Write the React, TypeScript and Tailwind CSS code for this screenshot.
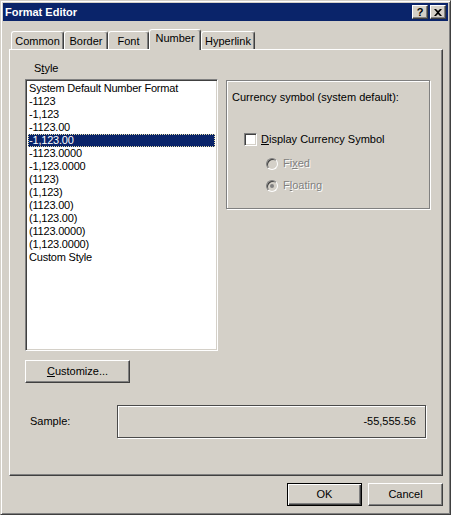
import React from 'react';

const styles = [
  'System Default Number Format',
  '-1123',
  '-1,123',
  '-1123.00',
  '-1,123.00',
  '-1123.0000',
  '-1,123.0000',
  '(1123)',
  '(1,123)',
  '(1123.00)',
  '(1,123.00)',
  '(1123.0000)',
  '(1,123.0000)',
  'Custom Style',
];

const tabs = [
  { label: 'Common', w: 'w-[53px]' },
  { label: 'Border', w: 'w-[44px]' },
  { label: 'Font', w: 'w-[41px]' },
  { label: 'Number', w: 'w-[52px]' },
  { label: 'Hyperlink', w: 'w-[54px]' },
];

// raised 3D edge used by buttons
const raised =
  'border border-t-white border-l-white border-r-[#404040] border-b-[#404040] shadow-[inset_-1px_-1px_0_#808080,inset_1px_1px_0_#d4d0c8]';

const disabled = 'text-[#808080] [text-shadow:1px_1px_0_#fff]';

function Radio({ checked }: { checked?: boolean }) {
  return (
    <span className="w-[12px] h-[12px] rounded-full border border-t-[#808080] border-l-[#808080] border-r-white border-b-white bg-[#d4d0c8] flex items-center justify-center shadow-[inset_1px_1px_0_#404040]">
      {checked && <span className="w-[4px] h-[4px] rounded-full bg-[#808080]" />}
    </span>
  );
}

export default function App() {
  const selected = 4;

  return (
    <div className="w-[451px] h-[515px] bg-[#d4d0c8] text-black text-[11px] leading-[13px] font-['Liberation_Sans',Arial,sans-serif] border border-t-[#d4d0c8] border-l-[#d4d0c8] border-r-[#404040] border-b-[#404040] shadow-[inset_1px_1px_0_#fff,inset_-1px_-1px_0_#808080] p-[2px] flex flex-col">
      {/* title bar */}
      <div className="h-[18px] bg-[#0a246a] flex items-center justify-between pl-[2px] pr-[2px]">
        <span className="text-white font-bold text-[11px]">Format Editor</span>
        <div className="flex gap-[2px]">
          <button className={`w-[16px] h-[14px] bg-[#d4d0c8] ${raised} flex items-center justify-center font-bold text-[11px] leading-none`}>
            ?
          </button>
          <button className={`w-[16px] h-[14px] bg-[#d4d0c8] ${raised} flex items-center justify-center`}>
            <svg width="8" height="7" viewBox="0 0 8 7">
              <path d="M0 0h2l2 2 2-2h2L5 3.5 8 7H6L4 5 2 7H0l3-3.5z" fill="#000" />
            </svg>
          </button>
        </div>
      </div>

      {/* tab strip */}
      <div className="mt-[8px] ml-[6px] pl-[2px] h-[20px] flex items-end">
        {tabs.map((t) => {
          const active = t.label === 'Number';
          return (
            <div
              key={t.label}
              className={`${t.w} ${active ? 'h-[21px] -mb-[1px] relative z-10 pb-[3px]' : 'h-[18px] pt-[1px]'} bg-[#d4d0c8] border-t border-l border-white border-r border-r-[#404040] rounded-t-[3px] shadow-[inset_-1px_0_0_#808080] flex items-center justify-center`}
            >
              {t.label}
            </div>
          );
        })}
      </div>

      {/* tab page */}
      <div className="ml-[6px] w-[434px] h-[427px] border border-t-white border-l-white border-r-[#404040] border-b-[#404040] shadow-[inset_-1px_-1px_0_#808080] pt-[12px] pl-[15px] flex flex-col">
        <div className="ml-[9px] h-[13px] mb-[4px]">
          S<span className="underline">t</span>yle
        </div>

        <div className="flex gap-[8px]">
          {/* style list */}
          <div className="w-[193px] h-[272px] bg-white border border-t-[#808080] border-l-[#808080] border-r-white border-b-white shadow-[inset_1px_1px_0_#404040,inset_-1px_-1px_0_#d4d0c8] p-[2px] tracking-[-0.2px]">
            {styles.map((s, i) => (
              <div
                key={s}
                className={`h-[13px] pl-[1px] whitespace-nowrap ${i === selected ? 'bg-[#0a246a] text-white outline-1 outline-dotted outline-[#e8e0a8] -outline-offset-1' : ''}`}
              >
                {s}
              </div>
            ))}
          </div>

          {/* currency group */}
          <div className="mt-[1px] w-[204px] h-[129px] border border-[#808080] shadow-[inset_1px_1px_0_#fff,1px_1px_0_#fff] pt-[10px] pl-[5px]">
            <div>Currency symbol (system default):</div>
            <div className="mt-[29px] ml-[12px] flex items-center gap-[4px] h-[13px]">
              <span className="w-[13px] h-[13px] bg-white border border-t-[#808080] border-l-[#808080] border-r-white border-b-white shadow-[inset_1px_1px_0_#404040,inset_-1px_-1px_0_#d4d0c8]" />
              <span>
                <span className="underline">D</span>isplay Currency Symbol
              </span>
            </div>
            <div className="mt-[11px] ml-[34px] flex items-center gap-[5px] h-[13px]">
              <Radio />
              <span className={disabled}>
                Fi<span className="underline">x</span>ed
              </span>
            </div>
            <div className="mt-[9px] ml-[34px] flex items-center gap-[5px] h-[13px]">
              <Radio checked />
              <span className={disabled}>
                F<span className="underline">l</span>oating
              </span>
            </div>
          </div>
        </div>

        <button className={`mt-[9px] w-[105px] h-[23px] bg-[#d4d0c8] ${raised} flex items-center justify-center`}>
          <span>
            <span className="underline">C</span>ustomize...
          </span>
        </button>

        <div className="mt-[22px] flex items-center">
          <span className="w-[92px] pl-[5px]">Sample:</span>
          <div className="w-[309px] h-[33px] border border-[#4a4a4a] shadow-[1px_1px_0_#fff,inset_1px_1px_0_#fff] flex items-center justify-end pr-[9px]">
            -55,555.56
          </div>
        </div>
      </div>

      {/* dialog buttons */}
      <div className="mt-[7px] ml-[6px] w-[434px] flex justify-end gap-[6px]">
        <button className="w-[75px] h-[23px] bg-[#d4d0c8] border border-black shadow-[inset_1px_1px_0_#fff,inset_-1px_-1px_0_#404040,inset_-2px_-2px_0_#808080] flex items-center justify-center">
          OK
        </button>
        <button className={`w-[75px] h-[23px] bg-[#d4d0c8] ${raised} flex items-center justify-center`}>
          Cancel
        </button>
      </div>
    </div>
  );
}
